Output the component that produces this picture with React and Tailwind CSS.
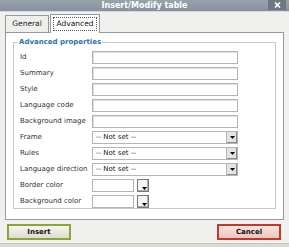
import React from "react";

const fields = ["Id", "Summary", "Style", "Language code", "Background image"];
const selects = ["Frame", "Rules", "Language direction"];
const colors = ["Border color", "Background color"];

function Arrow() {
  return (
    <div className="w-[11px] h-[11px] bg-[#e4e4e4] border-l border-[#b5b5b5] shadow-[inset_-1px_-1px_0_#888] flex items-center justify-center">
      <svg width="5" height="3" viewBox="0 0 5 3">
        <path d="M0 0h5L2.5 3z" fill="#000" />
      </svg>
    </div>
  );
}

export default function App() {
  return (
    <div className="w-[289px] h-[247px] flex flex-col bg-[#f0f0ee] text-[7px] text-[#333]" style={{ fontFamily: '"DejaVu Sans", Verdana, sans-serif' }}>
      {/* Title bar */}
      <div className="h-[11px] bg-gradient-to-b from-[#97a2ad] to-[#87929e] flex items-center relative shrink-0">
        <div className="flex-1 text-center text-white font-bold text-[8px] leading-none">Insert/Modify table</div>
        <div className="absolute right-[3px] top-0 w-[18px] h-[10px] bg-[#6e7883] flex items-center justify-center">
          <svg width="7" height="6" viewBox="0 0 7 6">
            <path d="M1 0.5L6 5.5M6 0.5L1 5.5" stroke="#fff" strokeWidth="1.6" />
          </svg>
        </div>
      </div>
      <div className="h-[1px] bg-[#d8d8d6] shrink-0" />

      {/* Tabs */}
      <div className="flex items-end pl-[5px] pt-[2px] h-[20px] shrink-0 gap-[1px] text-[7.5px]">
        <div className="h-[17px] w-[44px] border border-b-0 border-[#919b9c] bg-[#eeeeec] flex items-center justify-center text-[#222]">General</div>
        <div className="h-[19px] w-[50px] border border-b-0 border-[#919b9c] bg-white p-[2px] -mb-px relative">
          <div className="h-full w-full border border-dotted border-[#555] flex items-center justify-center text-[#111]">Advanced</div>
        </div>
      </div>

      {/* Panel */}
      <div className="mx-[5px] w-[279px] h-[188px] bg-white border border-[#919b9c] pt-[4px] pl-[7px] shrink-0">
        <fieldset className="w-[263px] h-[172px] border border-[#c8c8c8] pl-[6px]">
          <legend className="text-[#2b6fb6] font-bold text-[7px] px-[1px] -ml-[2px] leading-[10px]">Advanced properties</legend>
          <div className="flex flex-col gap-[3px] pt-[4px]">
            {fields.map((f) => (
              <div key={f} className="flex items-center h-[13px]">
                <span className="w-[72px] whitespace-nowrap">{f}</span>
                <div className="w-[146px] h-[13px] border border-[#b5b5b5] shadow-[inset_1px_1px_0_#ddd]" />
              </div>
            ))}
            {selects.map((f) => (
              <div key={f} className="flex items-center h-[13px]">
                <span className="w-[72px] whitespace-nowrap">{f}</span>
                <div className="w-[146px] h-[13px] border border-[#b5b5b5] flex items-center">
                  <span className="flex-1 pl-[3px] text-[#222]">-- Not set --</span>
                  <Arrow />
                </div>
              </div>
            ))}
            {colors.map((f) => (
              <div key={f} className="flex items-center h-[13px]">
                <span className="w-[72px] whitespace-nowrap">{f}</span>
                <div className="w-[42px] h-[13px] border border-[#b5b5b5]" />
                <div className="ml-[3px] w-[12px] h-[13px] border border-[#7a7a7a] bg-[#f4f4f4] relative shadow-[inset_-1px_-1px_0_#aaa]">
                  <svg className="absolute right-[1px] bottom-[1px]" width="5" height="3" viewBox="0 0 5 3">
                    <path d="M0 0h5L2.5 3z" fill="#000" />
                  </svg>
                </div>
              </div>
            ))}
          </div>
        </fieldset>
      </div>

      {/* Buttons */}
      <div className="flex justify-between px-[7px] pt-[4px] pr-[8px] shrink-0">
        <div className="w-[64px] h-[16px] border-2 border-[#8aa53a] bg-gradient-to-b from-[#f6f6ee] to-[#dcdcd2] flex items-center justify-center font-bold text-[#111]">Insert</div>
        <div className="w-[64px] h-[16px] border-2 border-[#c0392b] bg-gradient-to-b from-[#fbe3e0] to-[#eec4bf] flex items-center justify-center font-bold text-[#111]">Cancel</div>
      </div>

      <div className="flex-1" />
      <div className="h-[4px] bg-[#dcdad5] border-t border-[#c8c6c0] shrink-0" />
    </div>
  );
}
